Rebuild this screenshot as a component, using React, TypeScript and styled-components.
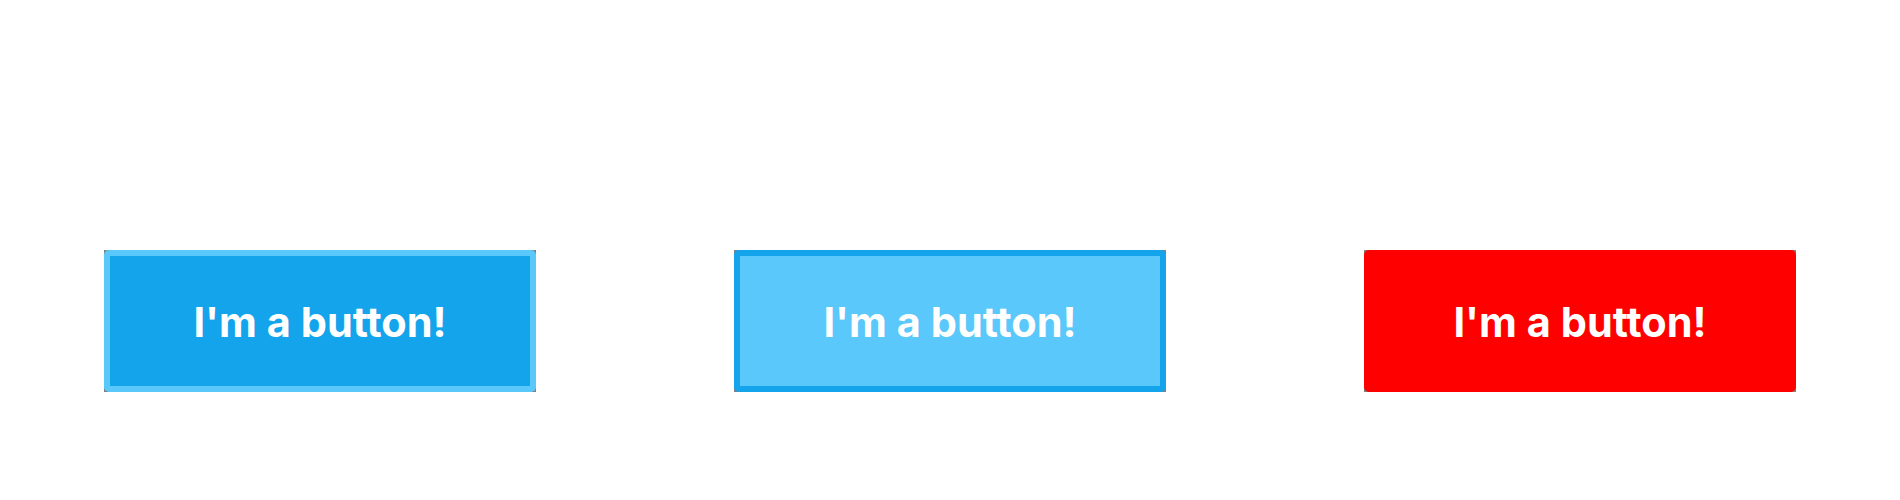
import React from "react";
import styled, { createGlobalStyle } from "styled-components";

const Global = createGlobalStyle`
  html, body { margin: 0; padding: 0; background: #ffffff; }
  body { font-family: "Inter", "Liberation Sans", sans-serif; }
`;

const Page = styled.div`
  width: 1900px;
  height: 500px;
  box-sizing: border-box;
  padding: 250px 104px 0 104px;
  display: flex;
  justify-content: space-between;
  align-items: flex-start;
`;

const Frame = styled.div`
  width: 432px;
  height: 142px;
  background: #808080;
  display: flex;
`;

type Variant = "primary" | "light" | "danger";

const palette: Record<Variant, { bg: string; border: string }> = {
  primary: { bg: "#13a4ec", border: "#5ac8fa" },
  light: { bg: "#5ac8fa", border: "#13a4ec" },
  danger: { bg: "#ff0000", border: "#ff0000" },
};

const Button = styled.button<{ $variant: Variant }>`
  flex: 1;
  margin: 0;
  box-sizing: border-box;
  border: 6px solid ${(p) => palette[p.$variant].border};
  border-radius: 5px;
  background: ${(p) => palette[p.$variant].bg};
  color: #ffffff;
  font-family: "Inter", "Liberation Sans", sans-serif;
  font-weight: 700;
  font-size: 41.5px;
  line-height: 1;
  padding: 4px 0 0 0;
  display: flex;
  align-items: center;
  justify-content: center;
  cursor: pointer;
`;

export default function App() {
  const variants: Variant[] = ["primary", "light", "danger"];
  return (
    <>
      <Global />
      <Page>
        {variants.map((v) => (
          <Frame key={v}>
            <Button $variant={v}>I'm a button!</Button>
          </Frame>
        ))}
      </Page>
    </>
  );
}
